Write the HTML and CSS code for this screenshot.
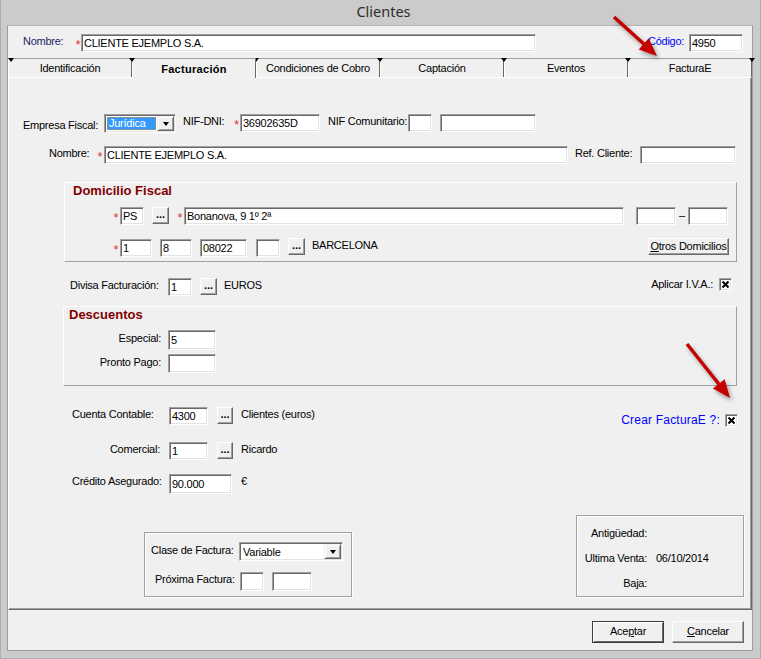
FILE: index.html
```html
<!DOCTYPE html>
<html lang="es">
<head>
<meta charset="utf-8">
<title>Clientes</title>
<link rel="stylesheet" href="styles.css">
</head>
<body>
<div class="window">
  <div class="titlebar">Clientes</div>
  <div class="client">
    <div class="toprow">
      <span class="lbl navy lbl-topnombre">Nombre:</span>
      <span class="req w6">*</span>
      <div class="field w455">CLIENTE EJEMPLO S.A.</div>
      <span class="lbl blue lbl-codigo">Código:</span>
      <div class="field w54">4950</div>
    </div>

    <div class="tabstrip">
      <div class="tab">Identificación</div>
      <div class="tab active">Facturación</div>
      <div class="tab">Condiciones de Cobro</div>
      <div class="tab">Captación</div>
      <div class="tab">Eventos</div>
      <div class="tab">FacturaE</div>
    </div>

    <div class="page">
      <div class="row row-empresa">
        <span class="lbl lbl-empresa">Empresa Fiscal:</span>
        <div class="combo w72">
          <span class="combo-val"><span class="combo-sel">Jurídica</span></span>
          <span class="combo-btn"><span class="tri"></span></span>
        </div>
        <span class="lbl lbl-nif">NIF-DNI:</span>
        <span class="req w7">*</span>
        <div class="field w80">36902635D</div>
        <span class="lbl lbl-nifc">NIF Comunitario:</span>
        <div class="field w24"></div>
        <div class="field w96 ml8"></div>
      </div>

      <div class="row row-nombre">
        <span class="lbl lbl-nombre">Nombre:</span>
        <span class="req w8">*</span>
        <div class="field w464">CLIENTE EJEMPLO S.A.</div>
        <span class="lbl lbl-ref">Ref. Cliente:</span>
        <div class="field w96"></div>
      </div>

      <div class="group group-dom">
        <div class="gtitle gtitle-dom">Domicilio Fiscal</div>
        <div class="row row-dom1">
          <span class="req w8">*</span>
          <div class="field w24">PS</div>
          <div class="dots ml8">...</div>
          <span class="req w8 ml7">*</span>
          <div class="field w440">Bonanova, 9 1º 2ª</div>
          <div class="field w40 ml12"></div>
          <span class="dash">–</span>
          <div class="field w40"></div>
        </div>
        <div class="row row-dom2">
          <span class="req w8 mt1">*</span>
          <div class="field w32 mt1">1</div>
          <div class="field w32 ml8 mt1">8</div>
          <div class="field w47 ml8 mt1">08022</div>
          <div class="field w24 ml9 mt1"></div>
          <div class="dots ml8">...</div>
          <span class="txt ml7">BARCELONA</span>
          <div class="btn btn-otros"><u>O</u>tros Domicilios</div>
        </div>
      </div>

      <div class="row row-divisa">
        <span class="lbl lbl-divisa">Divisa Facturación:</span>
        <div class="field w24">1</div>
        <div class="dots ml8">...</div>
        <span class="txt ml7">EUROS</span>
        <div class="chkgroup chk-iva">
          <span class="lbl">Aplicar I.V.A.:</span>
          <span class="chk ml6"><svg width="7" height="7" viewBox="0 0 7 7"><path d="M0.5 0.5 L6.5 6.5 M6.5 0.5 L0.5 6.5" stroke="#000" stroke-width="2" fill="none"/></svg></span>
        </div>
      </div>

      <div class="group group-desc">
        <div class="gtitle gtitle-desc">Descuentos</div>
        <div class="row row-especial">
          <span class="lbl lbl-desc">Especial:</span>
          <div class="field w48 h20">5</div>
        </div>
        <div class="row row-pronto">
          <span class="lbl lbl-desc">Pronto Pago:</span>
          <div class="field w48 h19"></div>
        </div>
      </div>

      <div class="row row-cuenta">
        <span class="lbl lbl-cuenta">Cuenta Contable:</span>
        <div class="field w39">4300</div>
        <div class="dots dots-sm ml9">...</div>
        <span class="txt ml8">Clientes (euros)</span>
        <div class="chkgroup chk-fe">
          <span class="lbl blue lbl-fe">Crear FacturaE ?:</span>
          <span class="chk ml5"><svg width="7" height="7" viewBox="0 0 7 7"><path d="M0.5 0.5 L6.5 6.5 M6.5 0.5 L0.5 6.5" stroke="#000" stroke-width="2" fill="none"/></svg></span>
        </div>
      </div>

      <div class="row row-comercial">
        <span class="lbl lbl-cuenta lbl-right">Comercial:</span>
        <div class="field w39">1</div>
        <div class="dots dots-sm ml9">...</div>
        <span class="txt ml8">Ricardo</span>
      </div>

      <div class="row row-credito">
        <span class="lbl lbl-cuenta">Crédito Asegurado:</span>
        <div class="field w63 h20">90.000</div>
        <span class="txt ml9">€</span>
      </div>

      <div class="row row-bottom">
        <div class="etched box-clase">
          <div class="row row-clase">
            <span class="lbl lbl-clase">Clase de Factura:</span>
            <div class="combo w104">
              <span class="combo-val combo-plain">Variable</span>
              <span class="combo-btn"><span class="tri"></span></span>
            </div>
          </div>
          <div class="row row-proxima">
            <span class="lbl lbl-proxima">Próxima Factura:</span>
            <div class="field w24 h19"></div>
            <div class="field w40 h19 ml8"></div>
          </div>
        </div>
        <div class="etched box-antig">
          <div class="row info-row info-first">
            <span class="lbl info-lbl">Antigüedad:</span>
          </div>
          <div class="row info-row">
            <span class="lbl info-lbl">Ultima Venta:</span>
            <span class="txt info-val">06/10/2014</span>
          </div>
          <div class="row info-row">
            <span class="lbl info-lbl">Baja:</span>
          </div>
        </div>
      </div>
    </div>

    <div class="btnrow">
      <div class="btn btn-main btn-default">Ace<u>p</u>tar</div>
      <div class="btn btn-main"><u>C</u>ancelar</div>
    </div>
  </div>

  <svg class="arrows" width="761" height="659" viewBox="0 0 761 659">
    <g class="arrow">
      <line x1="613" y1="17" x2="644" y2="45" stroke="#c40000" stroke-width="3.5"/>
      <polygon points="656,56 637.7,49.5 647.7,38.3" fill="#c40000"/>
    </g>
    <g class="arrow">
      <line x1="686" y1="344" x2="719" y2="385.5" stroke="#c40000" stroke-width="3.5"/>
      <polygon points="729,398 711.9,388.6 723.7,379.2" fill="#c40000"/>
    </g>
  </svg>
</div>
</body>
</html>
```

FILE: styles.css
```css
* { box-sizing: border-box; }
html, body { margin: 0; padding: 0; }
body {
  width: 761px;
  height: 659px;
  overflow: hidden;
  background: #c8c8c8;
  font-family: "Liberation Sans", Arial, sans-serif;
  font-size: 11px;
  letter-spacing: -0.25px;
  color: #000;
}

.window {
  position: relative;
  width: 761px;
  height: 659px;
  background: #cbcbcb;
  border-left: 1px solid #aeaeae;
  border-right: 1px solid #aeaeae;
  border-bottom: 1px solid #aeaeae;
  padding-left: 6px;
}

.titlebar {
  height: 25px;
  text-align: center;
  font-family: "Noto Sans", "Open Sans", sans-serif;
  font-size: 14.5px;
  line-height: 22px;
  letter-spacing: 0;
  color: #2e2e2e;
}

.client {
  width: 746px;
  height: 626px;
  background: #f0f0f0;
  border: 1px solid #9c9c9c;
  border-top-color: #b4b4b4;
  display: flex;
  flex-direction: column;
}

/* generic */
.row { display: flex; align-items: flex-start; flex: none; }
.lbl, .txt { white-space: nowrap; line-height: 14px; flex: none; }
.navy { color: #1f1d66; }
.blue { color: #0000ff; }
.req {
  flex: none;
  color: #e0242a;
  font-size: 12px;
  line-height: 14px;
  padding-top: 4px;
  text-align: center;
  letter-spacing: 0;
}

.field {
  flex: none;
  height: 18px;
  background: #fff;
  border: 1px solid;
  border-color: #a0a0a0 #fff #fff #a0a0a0;
  box-shadow: inset 1px 1px 0 #696969, inset -1px -1px 0 #e3e3e3;
  padding: 1px 2px 0 2px;
  line-height: 15px;
  white-space: nowrap;
  overflow: hidden;
}
.h19 { height: 19px; padding-top: 2px; }
.h20 { height: 20px; padding-top: 2px; }

.w6 { width: 6px; } .w7 { width: 7px; } .w8 { width: 8px; }
.w24 { width: 24px; } .w32 { width: 32px; } .w39 { width: 39px; }
.w40 { width: 40px; } .w47 { width: 47px; } .w48 { width: 48px; }
.w54 { width: 54px; } .w63 { width: 63px; } .w72 { width: 72px; }
.w80 { width: 80px; } .w96 { width: 96px; } .w104 { width: 104px; }
.w440 { width: 440px; } .w455 { width: 455px; } .w464 { width: 464px; }
.ml5 { margin-left: 5px; } .ml6 { margin-left: 6px; } .ml7 { margin-left: 7px; }
.ml8 { margin-left: 8px; } .ml9 { margin-left: 9px; } .ml12 { margin-left: 12px; }
.mt1 { margin-top: 1px; }

.dots {
  flex: none;
  width: 17px;
  height: 17px;
  background: #f0f0f0;
  border: 1px solid;
  border-color: #fff #696969 #696969 #fff;
  box-shadow: inset -1px -1px 0 #a0a0a0;
  font-weight: bold;
  text-align: center;
  line-height: 13px;
  letter-spacing: 0;
}
.dots-sm { width: 16px; }

.combo {
  flex: none;
  display: flex;
  height: 19px;
  background: #fff;
  border: 1px solid;
  border-color: #a0a0a0 #fff #fff #a0a0a0;
  box-shadow: inset 1px 1px 0 #696969, inset -1px -1px 0 #e3e3e3;
  padding: 1px;
}
.combo-val { flex: 1; padding: 1px; overflow: hidden; white-space: nowrap; }
.combo-sel {
  display: block;
  height: 100%;
  background: #3399ff;
  color: #fff;
  border: 1px dotted #c89030;
  padding-left: 1px;
  line-height: 11px;
}
.combo-plain { padding: 2px 0 0 2px; line-height: 13px; }
.combo-btn {
  flex: none;
  width: 17px;
  height: 100%;
  background: #f0f0f0;
  border: 1px solid;
  border-color: #f0f0f0 #696969 #696969 #f0f0f0;
  box-shadow: inset 1px 1px 0 #fff, inset -1px -1px 0 #a0a0a0;
  display: flex;
  align-items: center;
  justify-content: center;
}
.tri {
  width: 0;
  height: 0;
  border-left: 3.5px solid transparent;
  border-right: 3.5px solid transparent;
  border-top: 4px solid #000;
}

.chkgroup { display: flex; align-items: center; margin-left: auto; }
.chk {
  flex: none;
  width: 13px;
  height: 13px;
  background: #fff;
  border: 1px solid;
  border-color: #a0a0a0 #fff #fff #a0a0a0;
  box-shadow: inset 1px 1px 0 #696969, inset -1px -1px 0 #e3e3e3;
  display: flex;
  align-items: center;
  justify-content: center;
}
.chk svg { display: block; }

.btn {
  flex: none;
  background: #f0f0f0;
  border: 1px solid;
  border-color: #fff #696969 #696969 #fff;
  box-shadow: inset -1px -1px 0 #a0a0a0;
  text-align: center;
  white-space: nowrap;
}

/* top row */
.toprow { display: flex; align-items: flex-start; height: 18px; margin-top: 8px; flex: none; }
.lbl-topnombre { margin-left: 15px; width: 52px; }
.lbl-codigo { margin-left: auto; width: 41px; }
.toprow .field:last-child { margin-right: 9px; }

/* tabs */
.tabstrip {
  display: flex;
  align-items: flex-start;
  height: 19px;
  margin-top: 6px;
  flex: none;
}
.tab {
  position: relative;
  width: 124px;
  height: 19px;
  border-top: 1px solid #a0a0a0;
  border-left: 1px solid #fff;
  border-right: 1px solid #696969;
  text-align: center;
  padding-top: 1px;
  line-height: 16px;
  white-space: nowrap;
}
.tab::before {
  content: "";
  position: absolute;
  top: -1px;
  left: -4px;
  border-left: 3px solid transparent;
  border-right: 3px solid transparent;
  border-top: 4px solid #000;
}
.tab:first-child::before { left: -1px; }
.tab:last-child::after {
  content: "";
  position: absolute;
  top: -1px;
  right: -4px;
  border-left: 3px solid transparent;
  border-right: 3px solid transparent;
  border-top: 4px solid #000;
}
.tab.active {
  height: 20px;
  margin-bottom: -1px;
  z-index: 1;
  font-weight: bold;
  letter-spacing: 0.3px;
  padding-top: 3px;
  line-height: 15px;
  background: #f0f0f0;
}

/* page */
.page {
  flex: none;
  height: 533px;
  border: 1px solid;
  border-color: #fff #696969 #696969 #fff;
  box-shadow: inset -1px -1px 0 #a0a0a0;
  display: flex;
  flex-direction: column;
}

.row-empresa { margin-top: 36px; height: 19px; }
.lbl-empresa { margin-left: 14px; width: 81px; padding-top: 4px; }
.lbl-nif { margin-left: 7px; width: 50px; }
.lbl-nifc { margin-left: 8px; width: 80px; }

.row-nombre { margin-top: 13px; height: 18px; }
.lbl-nombre { margin-left: 40px; width: 47px; }
.lbl-ref { margin-left: 7px; width: 65px; }

.group {
  flex: none;
  border: 1px solid;
  border-color: #fff #a0a0a0 #a0a0a0 #fff;
  display: flex;
  flex-direction: column;
}
.gtitle {
  height: 16px;
  line-height: 16px;
  font-size: 13px;
  font-weight: bold;
  color: #800000;
  letter-spacing: 0;
  white-space: nowrap;
}
.group-dom { margin-top: 18px; margin-left: 55px; width: 673px; height: 80px; }
.gtitle-dom { margin-left: 8px; }
.row-dom1 { margin-top: 8px; margin-left: 47px; height: 18px; }
.dash { flex: none; width: 12px; text-align: center; line-height: 16px; }
.row-dom2 { margin-top: 13px; margin-left: 47px; margin-right: 7px; height: 19px; }
.btn-otros { margin-left: auto; width: 81px; height: 17px; line-height: 14px; }

.row-divisa { margin-top: 16px; margin-left: 61px; margin-right: 19px; height: 18px; }
.lbl-divisa { width: 98px; }
.chk-iva { margin-top: -1px; }

.group-desc { margin-top: 10px; margin-left: 54px; width: 674px; height: 80px; }
.gtitle-desc { margin-left: 5px; }
.row-especial { margin-top: 7px; height: 20px; }
.row-pronto { margin-top: 4px; height: 19px; }
.lbl-desc { width: 104px; text-align: right; padding-right: 7px; padding-top: 1px; }

.row-cuenta { margin-top: 21px; margin-left: 63px; margin-right: 13px; height: 18px; }
.lbl-cuenta { width: 97px; }
.lbl-right { text-align: right; padding-right: 9px; }
.chk-fe { margin-top: 6px; }
.lbl-fe { font-size: 12px; letter-spacing: 0.2px; }
.row-comercial { margin-top: 17px; margin-left: 63px; height: 18px; }
.row-credito { margin-top: 14px; margin-left: 63px; height: 20px; }

.row-bottom { margin-top: 21px; height: 82px; align-items: flex-end; margin-right: 7px; }
.etched {
  flex: none;
  border: 1px solid #a0a0a0;
  box-shadow: inset 1px 1px 0 #fff, 1px 1px 0 #fff;
  display: flex;
  flex-direction: column;
}
.box-clase { margin-left: 135px; width: 208px; height: 65px; }
.row-clase { margin-top: 9px; margin-left: 6px; height: 19px; }
.lbl-clase { width: 88px; padding-top: 1px; }
.row-proxima { margin-top: 11px; margin-left: 10px; height: 19px; }
.lbl-proxima { width: 85px; }
.box-antig { margin-left: auto; width: 168px; height: 82px; }
.info-row { margin-top: 11px; height: 14px; }
.info-first { margin-top: 10px; }
.info-lbl { width: 75px; text-align: right; padding-right: 5px; }
.info-val { margin-left: 4px; }

/* buttons */
.btnrow {
  flex: none;
  display: flex;
  justify-content: flex-end;
  gap: 8px;
  padding-top: 11px;
  padding-right: 8px;
}
.btn-main { width: 72px; height: 22px; line-height: 19px; }
.btn-default {
  border: 1px solid #3c3c3c;
  box-shadow: inset 1px 1px 0 #fff, inset -1px -1px 0 #696969;
}

/* annotation arrows */
.arrows {
  position: absolute;
  left: 0;
  top: 0;
  pointer-events: none;
}
.arrow { filter: drop-shadow(2px 3px 2px rgba(0, 0, 0, 0.35)); }
```
